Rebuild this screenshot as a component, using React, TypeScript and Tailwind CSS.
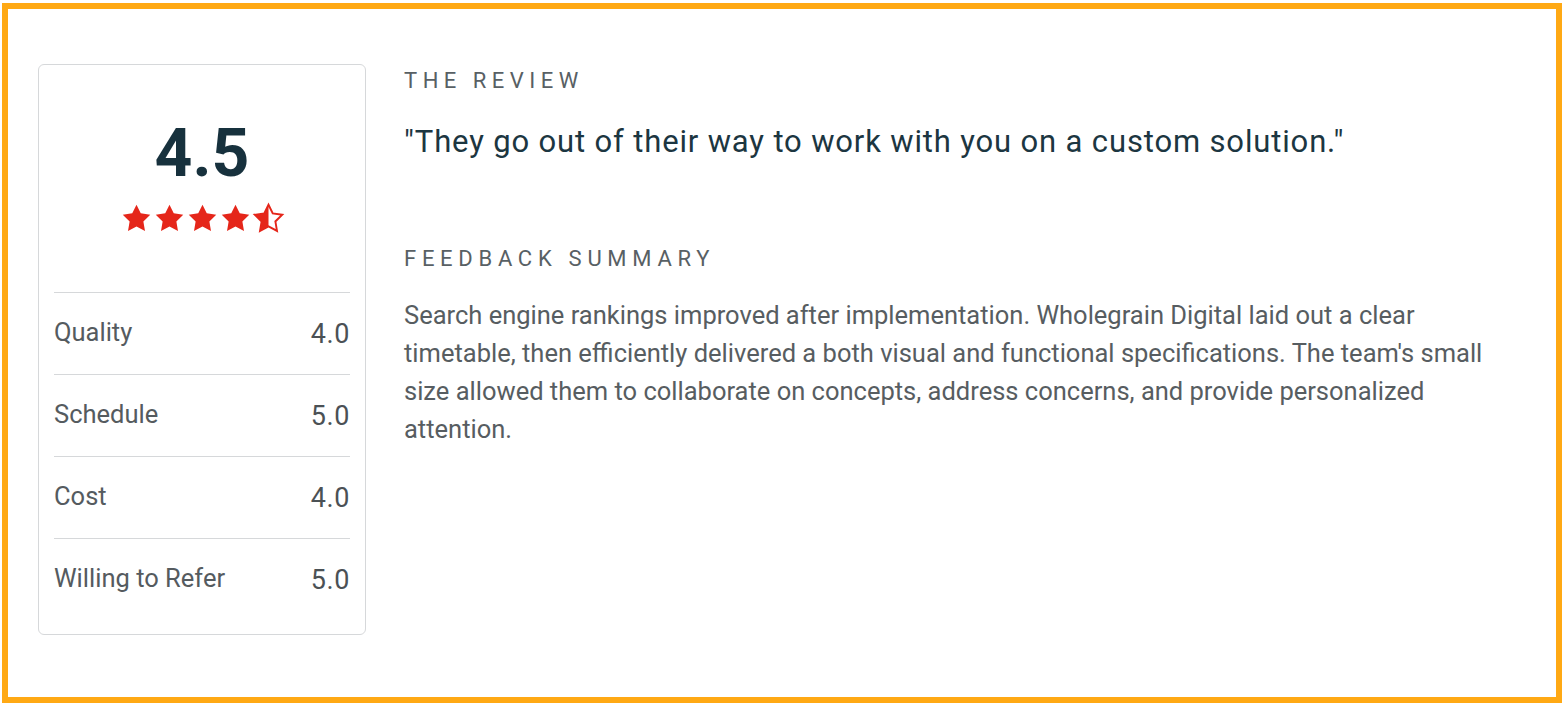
import React from "react";

const STAR =
  "M12 2l3.09 6.26L22 9.27l-5 4.87 1.18 6.88L12 17.77l-6.18 3.25L7 14.14 2 9.27l6.91-1.01L12 2z";

const Star = ({ half = false }: { half?: boolean }) => (
  <svg width="33" height="33" viewBox="0 0 24 24" aria-hidden="true">
    {half ? (
      <>
        <defs>
          <clipPath id="left-half">
            <rect x="0" y="0" width="12" height="24" />
          </clipPath>
        </defs>
        <path d={STAR} fill="none" stroke="#e5261a" strokeWidth={1.4} strokeLinejoin="miter" />
        <path d={STAR} fill="#e5261a" clipPath="url(#left-half)" />
      </>
    ) : (
      <path d={STAR} fill="#e5261a" />
    )}
  </svg>
);

const ratings = [
  { label: "Quality", value: "4.0" },
  { label: "Schedule", value: "5.0" },
  { label: "Cost", value: "4.0" },
  { label: "Willing to Refer", value: "5.0" },
];

export default function App() {
  return (
    <div
      className="h-[705px] w-[1564px] bg-white pl-[2px] pt-[3px]"
      style={{ fontFamily: "Roboto, 'Liberation Sans', sans-serif" }}
    >
      <div className="flex h-[700px] w-[1560px] gap-[38px] border-[6px] border-[#ffa914] pl-[30px] pr-[46px] pt-[55px]">
        {/* Rating card */}
        <div className="flex h-[571px] w-[328px] shrink-0 flex-col rounded-[6px] border border-[#d6d8da] px-[15px] pb-[14px]">
          <div className="flex h-[227px] flex-col items-center pt-[56px]">
            <div className="text-[66px] font-bold leading-none text-[#17313d]">4.5</div>
            <div className="mt-[15px] flex">
              <Star />
              <Star />
              <Star />
              <Star />
              <Star half />
            </div>
          </div>
          {ratings.map((r) => (
            <div
              key={r.label}
              className="flex h-[82px] items-center justify-between border-t border-[#d6d8da]"
            >
              <span className="mt-[-2px] text-[25.5px] text-[#555b5f]">{r.label}</span>
              <span className="mt-[2px] text-[27px] tracking-[0.6px] text-[#4b5155]">
                {r.value}
              </span>
            </div>
          ))}
        </div>

        {/* Review text */}
        <div className="flex-1">
          <h3 className="text-[22px] leading-[33px] tracking-[0.25em] text-[#586064]">
            THE REVIEW
          </h3>
          <p className="mt-[25px] text-[31px] leading-[40px] tracking-[0.85px] text-[#1c3641]">
            "They go out of their way to work with you on a custom solution."
          </p>
          <h3 className="mt-[80px] text-[22px] leading-[33px] tracking-[0.26em] text-[#586064]">
            FEEDBACK SUMMARY
          </h3>
          <p className="mt-[21px] text-[25.5px] leading-[38px] text-[#575d61]">
            Search engine rankings improved after implementation. Wholegrain Digital laid out a
            clear timetable, then efficiently delivered a both visual and functional
            specifications. The team's small size allowed them to collaborate on concepts,
            address concerns, and provide personalized attention.
          </p>
        </div>
      </div>
    </div>
  );
}
